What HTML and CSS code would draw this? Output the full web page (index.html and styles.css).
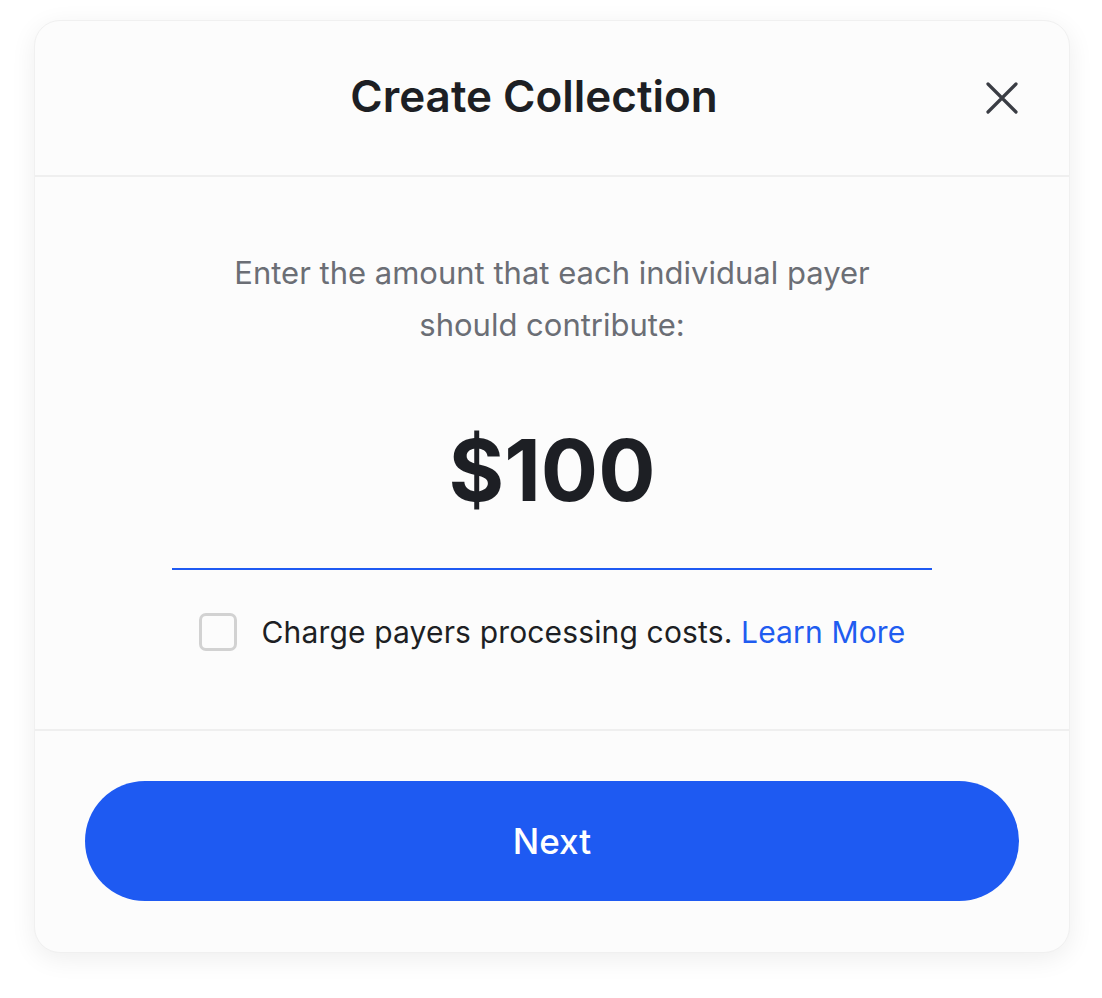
FILE: index.html
```html
<!DOCTYPE html>
<html lang="en">
<head>
  <meta charset="UTF-8">
  <meta name="viewport" content="width=device-width, initial-scale=1.0">
  <title>Create Collection</title>
  <link rel="stylesheet" href="styles.css">
</head>
<body>
  <!-- Modal -->
  <div class="modal">
    <div class="modal-header">
      <h1 class="modal-title">Create Collection</h1>
      <button class="close-btn" aria-label="Close">
        <svg width="34" height="34" viewBox="0 0 34 34">
          <path d="M3 3 L31 31 M31 3 L3 31" stroke="#3a3d44" stroke-width="3.2" stroke-linecap="round" fill="none"/>
        </svg>
      </button>
    </div>

    <div class="modal-body">
      <p class="hint">Enter the amount that each individual payer<br>should contribute:</p>
      <div class="amount-field">
        <span class="amount">$100</span>
      </div>
      <label class="fee-row">
        <span class="checkbox"></span>
        <span class="fee-text">Charge payers processing costs. <a href="#" class="learn-more">Learn More</a></span>
      </label>
    </div>

    <div class="modal-footer">
      <button class="next-btn">Next</button>
    </div>
  </div>
</body>
</html>
```

FILE: styles.css
```css
body {
  margin: 0;
  padding: 20px 32px 45px 34px;
  background: #ffffff;
  font-family: Inter, "Noto Sans", sans-serif;
}

.modal {
  width: 1036px;
  height: 933px;
  box-sizing: border-box;
  background: #fcfcfc;
  border: 1px solid #f0f0f0;
  border-radius: 26px;
  box-shadow: 0 6px 26px rgba(0, 0, 0, 0.07);
  display: flex;
  flex-direction: column;
  overflow: hidden;
}

/* Header */
.modal-header {
  height: 156px;
  position: relative;
  display: flex;
  align-items: center;
  justify-content: center;
  padding-right: 36px;
  padding-bottom: 4px;
  box-sizing: border-box;
  border-bottom: 2px solid #efefef;
}

.modal-title {
  margin: 0;
  font-size: 44px;
  font-weight: 600;
  color: #1d1f24;
}

.close-btn {
  position: absolute;
  right: 50px;
  top: 60px;
  background: none;
  border: none;
  padding: 0;
  cursor: pointer;
  width: 34px;
  height: 34px;
}

/* Body */
.modal-body {
  flex: 1;
  display: flex;
  flex-direction: column;
  align-items: center;
  padding-top: 70px;
  border-bottom: 2px solid #efefef;
}

.hint {
  margin: 0;
  font-size: 31px;
  line-height: 52px;
  color: #6b6e75;
  text-align: center;
}

.amount-field {
  width: 760px;
  margin-top: 70px;
  padding-bottom: 47px;
  border-bottom: 2px solid #1f5af2;
  text-align: center;
}

.amount {
  display: block;
  font-size: 85px;
  line-height: 100px;
  font-weight: 700;
  color: #1d1f24;
}

.fee-row {
  margin-top: 42px;
  display: flex;
  align-items: center;
  gap: 25px;
  cursor: pointer;
}

.checkbox {
  width: 32px;
  height: 32px;
  border: 3px solid #d2d2d2;
  border-radius: 7px;
  background: #fcfcfc;
}

.fee-text {
  font-size: 30px;
  line-height: 40px;
  letter-spacing: 0.15px;
  color: #1d1f24;
}

.learn-more {
  color: #1f5cf0;
  text-decoration: none;
}

/* Footer */
.modal-footer {
  height: 221px;
  box-sizing: border-box;
  padding: 50px 50px 0;
}

.next-btn {
  width: 100%;
  height: 120px;
  border: none;
  border-radius: 60px;
  background: #1e5af2;
  color: #ffffff;
  font-family: Inter, "Noto Sans", sans-serif;
  font-size: 35px;
  font-weight: 500;
  cursor: pointer;
}
```
